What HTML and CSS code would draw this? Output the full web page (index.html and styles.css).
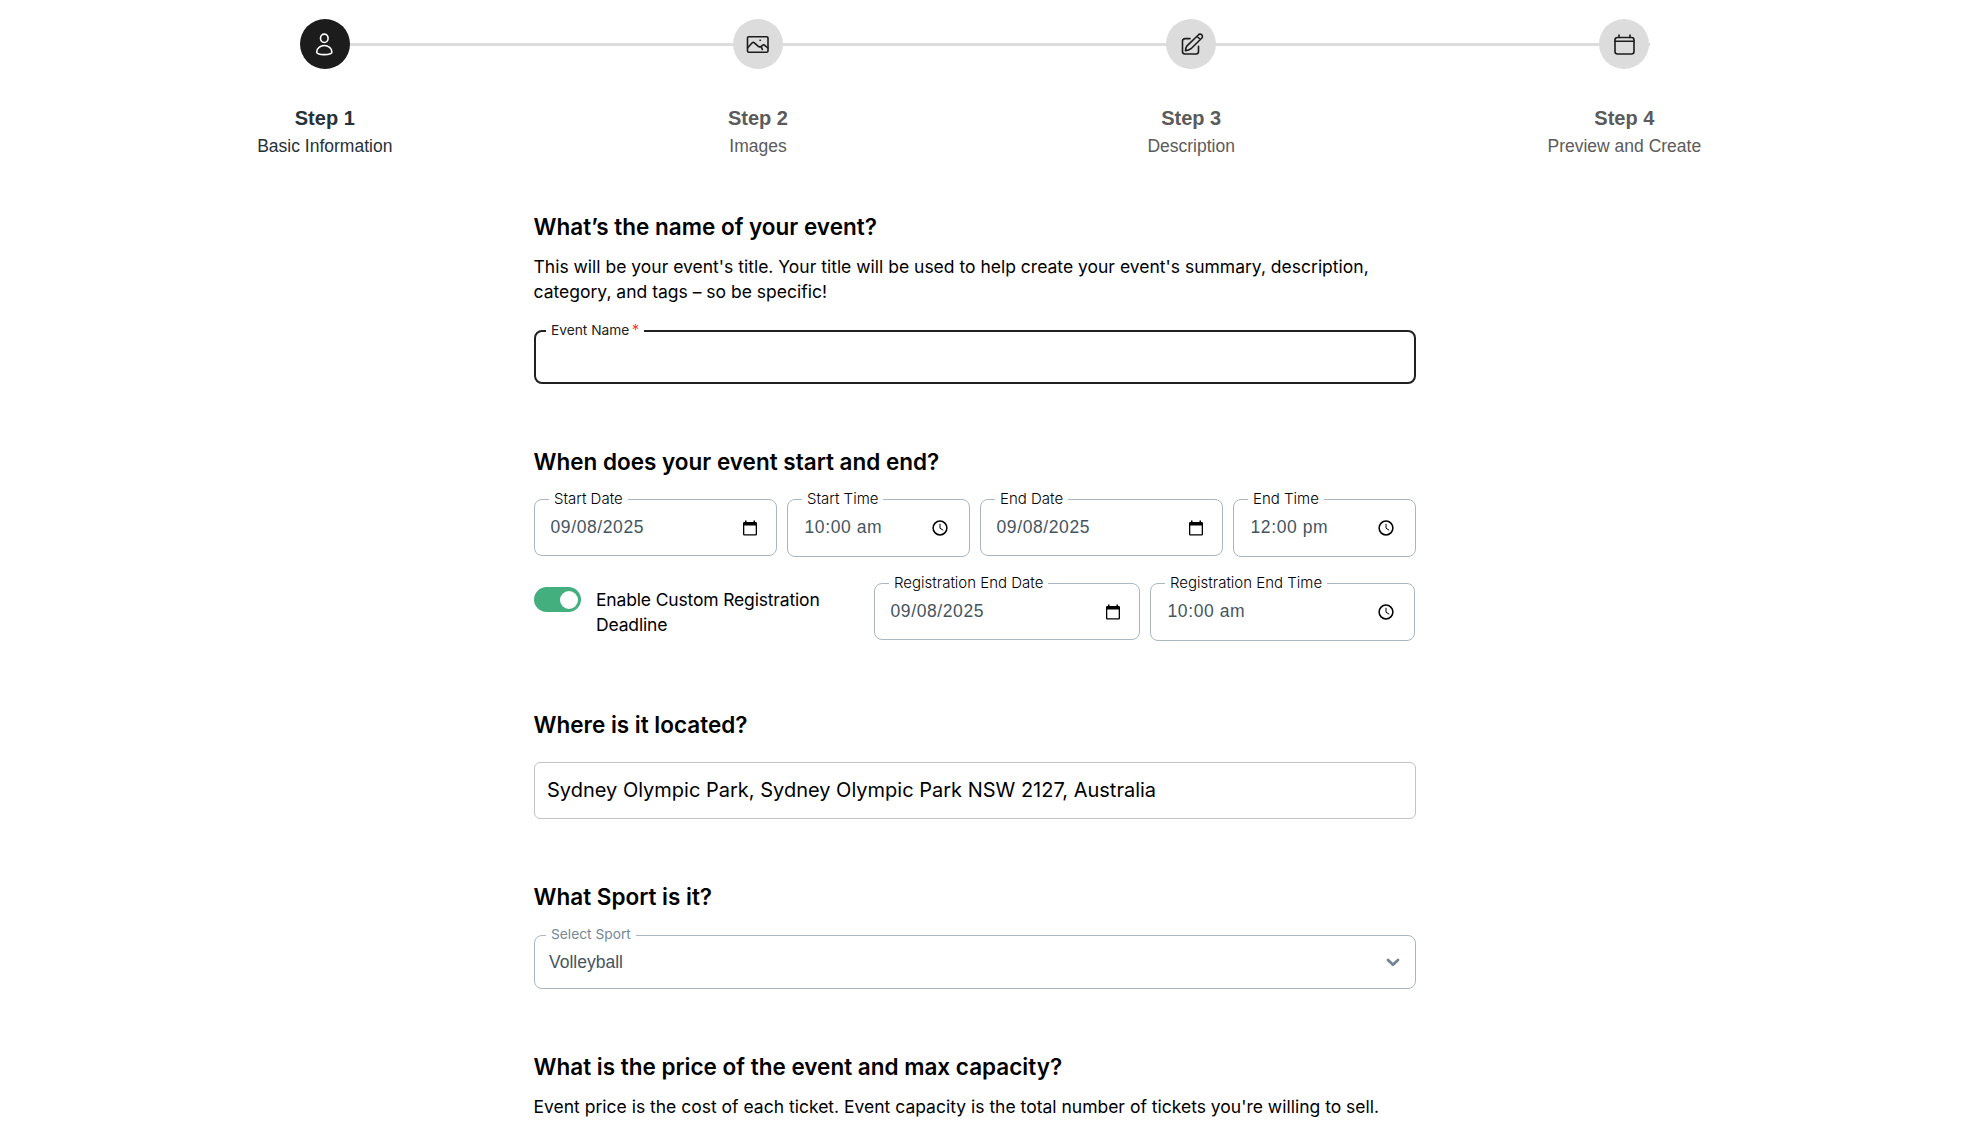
FILE: index.html
```html
<!DOCTYPE html>
<html lang="en">
<head>
<meta charset="utf-8">
<title>Create event</title>
<link rel="stylesheet" href="styles.css">
</head>
<body>
<main class="page">
  <ol class="stepper">
    <li class="step active">
      <span class="dot"><svg width="25" height="26" viewBox="0 0 25 26"><ellipse cx="12.300" cy="7.300" rx="3.800" ry="4.200"/><path d="M12.300 14.500c4 0 7.600 3 7.600 6.500 0 2-3.400 2.600-7.600 2.600s-7.600-.6-7.600-2.600c0-3.500 3.600-6.500 7.600-6.500z"/></svg></span>
      <strong>Step 1</strong><small>Basic Information</small>
    </li>
    <li class="step">
      <span class="dot"><svg width="24" height="24" viewBox="0 0 24 24"><rect x="1.500" y="4.700" width="20.500" height="15.500" rx="1.300"/><path d="M1.700 15.800l4.500-5q1.100-1 2.200 0l3.600 3.400q1.500 1.200 3.100.2l1.200 3M15 15l1.500-1.700q1.200-1 2.300 0l3 2.700M14 8.300h.4"/></svg></span>
      <strong>Step 2</strong><small>Images</small>
    </li>
    <li class="step">
      <span class="dot"><svg width="25" height="26" viewBox="0 0 25 26"><path d="M11 7.600H6a2.500 2.500 0 0 0-2.500 2.500V20.500A2.500 2.500 0 0 0 6 23h11a2.500 2.500 0 0 0 2.500-2.500v-5.300"/><path d="M6.500 19.800q.2-3.200 1.500-5L19.300 4a2.300 2.300 0 0 1 3.600 3L12 17.700q-2.200 1.700-5.500 2.100zM18 5.300l3.300 3.200"/></svg></span>
      <strong>Step 3</strong><small>Description</small>
    </li>
    <li class="step">
      <span class="dot"><svg width="24" height="24" viewBox="0 0 24 24"><rect x="3" y="5.500" width="19" height="16.500" rx="2.500"/><path d="M3 9.300h19M7 3v2.500M18 3v2.500"/></svg></span>
      <strong>Step 4</strong><small>Preview and Create</small>
    </li>
  </ol>

  <form class="form">
    <section class="name">
      <h2>What’s the name of your event?</h2>
      <p>This will be your event's title. Your title will be used to help create your event's summary, description, category, and tags – so be specific!</p>
      <div class="field focused"><label>Event Name <i>*</i></label></div>
    </section>

    <section class="when">
      <h2>When does your event start and end?</h2>
      <div class="row dates">
        <div class="field date"><label>Start Date</label><span>09/08/2025</span><svg class="pick" viewBox="0 0 20 20"><use href="#cal"/></svg></div>
        <div class="field time"><label>Start Time</label><span>10:00 am</span><svg class="pick" viewBox="0 0 20 20"><use href="#clock"/></svg></div>
        <div class="field date"><label>End Date</label><span>09/08/2025</span><svg class="pick" viewBox="0 0 20 20"><use href="#cal"/></svg></div>
        <div class="field time"><label>End Time</label><span>12:00 pm</span><svg class="pick" viewBox="0 0 20 20"><use href="#clock"/></svg></div>
      </div>
      <div class="row deadline">
        <span class="switch"></span>
        <span class="switch-label">Enable Custom Registration Deadline</span>
        <div class="field date"><label>Registration End Date</label><span>09/08/2025</span><svg class="pick" viewBox="0 0 20 20"><use href="#cal"/></svg></div>
        <div class="field time"><label>Registration End Time</label><span>10:00 am</span><svg class="pick" viewBox="0 0 20 20"><use href="#clock"/></svg></div>
      </div>
    </section>

    <section class="where">
      <h2>Where is it located?</h2>
      <div class="field place">Sydney Olympic Park, Sydney Olympic Park NSW 2127, Australia</div>
    </section>

    <section class="sport">
      <h2>What Sport is it?</h2>
      <div class="field select"><label>Select Sport</label><span>Volleyball</span><svg class="chevron" viewBox="0 0 14 9"><path d="M2 2l5 4.700L12 2"/></svg></div>
    </section>

    <section class="price">
      <h2>What is the price of the event and max capacity?</h2>
      <p>Event price is the cost of each ticket. Event capacity is the total number of tickets you're willing to sell.</p>
    </section>
  </form>
</main>
<svg class="defs" width="0" height="0">
  <symbol id="cal" viewBox="0 0 20 20"><path fill-rule="evenodd" d="M5 2.500h1.500v1.400h7V2.500H15v1.400h.7a1.300 1.300 0 0 1 1.300 1.300v11a1.300 1.300 0 0 1-1.300 1.300H4.300A1.300 1.300 0 0 1 3 16.200v-11a1.300 1.300 0 0 1 1.300-1.300H5zM4.300 7.600v8.600h11.400V7.600z"/></symbol>
  <symbol id="clock" viewBox="0 0 20 20"><circle cx="10" cy="10" r="6.900" fill="none" stroke="#000" stroke-width="1.500"/><path d="M10 5.800v4.400l3.200 2" fill="none" stroke="#000" stroke-width="1"/></symbol>
</svg>
</body>
</html>
```
FILE: styles.css
```css
* { box-sizing: border-box; }
body { margin: 0; background: #fff; color: #000; font-family: Inter, sans-serif; }
.page { height: 1144px; overflow: hidden; padding-top: 19px; }
.defs { display: block; }

.stepper { display: grid; grid-template-columns: repeat(4, 433.2px); margin: 0; padding: 0 0 0 108.2px; list-style: none; font-family: "Liberation Sans", sans-serif; background: linear-gradient(#dddddd, #dddddd) 325px 24px / 1325px 3px no-repeat; }
.step { display: flex; flex-direction: column; align-items: center; color: #5b5b5b; }
.step.active { color: #263238; }
.dot { display: grid; place-items: center; width: 50px; height: 50px; border-radius: 50%; background: #dcdcdc; }
.dot svg { fill: none; stroke: #1c1c1c; stroke-width: 1.6; stroke-linecap: round; stroke-linejoin: round; }
.active .dot { background: #1c1c1c; }
.active .dot svg { stroke: #fff; }
.step strong { margin-top: 34px; font-size: 20px; line-height: 30px; }
.step small { font-size: 17.5px; line-height: 26px; }

.form { width: 882px; margin-left: 534px; padding-top: 50px; }
h2 { margin: 0 0 0 -.5px; font-size: 22.5px; font-weight: 600; line-height: 35px; white-space: nowrap; }
p { margin: 10px 0 0 -.5px; font-size: 17.5px; line-height: 25px; }

.field { position: relative; display: flex; align-items: center; border: 1px solid #abb7c0; border-radius: 8px; }
.field label { position: absolute; top: -11px; left: 14px; padding: 0 5px; background: #fff; font-size: 15px; font-weight: 300; line-height: 20px; white-space: nowrap; }
.field span { color: #455560; font: 17.5px "Liberation Sans", sans-serif; }
.focused { height: 54px; margin-top: 26px; border: 2px solid #212121; }
.field.focused label { top: -12px; left: 10px; color: #212121; font-size: 13.75px; font-weight: 400; }
.focused i { margin-left: -1.5px; color: #f44336; font-size: 15px; line-height: 1; font-style: normal; }

.when { margin-top: 60px; }
.row { display: flex; align-items: flex-start; gap: 10px; }
.dates { margin-top: 20px; }
.date { width: 243px; height: 57px; padding: 0 16px 0 15.5px; }
.time { width: 183px; height: 58px; padding: 0 19px 0 16.5px; }
.time span { padding-bottom: 2px; }
.row .field { justify-content: space-between; }
.row .field span { letter-spacing: .6px; }
.pick { width: 20px; height: 20px; }
.deadline { margin-top: 26px; gap: 0; }
.deadline .field { width: 266px; }
.deadline .date { margin-right: 10px; }
.deadline .time { width: 265px; padding-right: 18px; }
.switch { display: flex; justify-content: flex-end; width: 47px; height: 25px; margin-top: 4px; padding: 3.500px 3px; border-radius: 13px; background: #43ae7e; }
.switch::after { content: ""; width: 18px; height: 18px; border-radius: 50%; background: #fff; }
.switch-label { width: 293px; margin-top: 4px; padding: 0 40px 0 15px; font-size: 17.5px; line-height: 25px; letter-spacing: -.16px; }

.where { margin-top: 66px; }
.place { height: 57px; margin-top: 20px; padding: 0 12px 1px; border-color: #c4c4c4; border-radius: 6px; font-size: 20px; }
.sport { margin-top: 60px; }
.select { height: 54px; margin-top: 21px; padding: 0 15px 0 14px; justify-content: space-between; }
.field.select label { top: -12px; left: 11px; color: #758997; font-size: 13.75px; font-weight: 400; }
.chevron { width: 14px; height: 9px; fill: none; stroke: #718595; stroke-width: 2.8; stroke-linecap: round; stroke-linejoin: round; }
.price { margin-top: 60px; }
.price p { white-space: nowrap; }
```
